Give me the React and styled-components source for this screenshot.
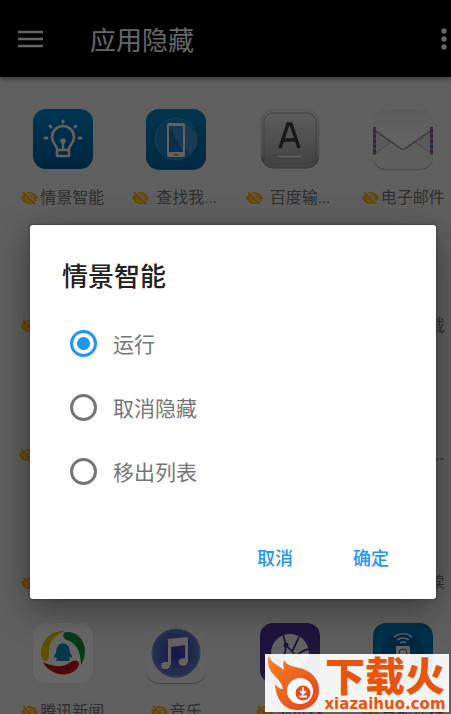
import React from 'react';
import styled, { createGlobalStyle } from 'styled-components';

const GlobalStyle = createGlobalStyle`
  * { box-sizing: border-box; }
  body {
    margin: 0;
    background: #ededed;
    font-family: Roboto, "Noto Sans CJK SC", sans-serif;
    overflow: hidden;
  }
  button { font-family: inherit; }
`;

const Page = styled.div`
  position: relative;
  height: 100vh;
  overflow: hidden;
`;

const Toolbar = styled.header`
  display: flex;
  align-items: center;
  height: 77px;
  padding-left: 16px;
  background: #000;
  color: #fff;
  box-shadow: 0 2px 5px rgba(0, 0, 0, 0.4);
`;

const Title = styled.h1`
  flex: 1;
  margin: 0 0 0 44px;
  padding-top: 4px;
  font-size: 26px;
  line-height: 36px;
  font-weight: 400;
`;

const IconButton = styled.button`
  display: flex;
  padding: 0;
  border: 0;
  background: none;
  color: inherit;
`;

const Grid = styled.main`
  display: grid;
  grid-template-columns: repeat(4, 1fr);
  grid-template-rows: repeat(2, 128px 129px);
  margin: 32px -9px 0 6px;
`;

const AppCell = styled.div`
  display: flex;
  flex-direction: column;
  align-items: center;
  gap: 17px;
`;

const AppIcon = styled.svg`
  display: block;
  width: 60px;
  height: 60px;
  overflow: visible;
`;

const Label = styled.div`
  display: flex;
  align-items: center;
  gap: ${(p) => (p.$cut ? 7 : 2)}px;
  font-size: 16px;
  line-height: 24px;
  color: #777;
  white-space: nowrap;
`;

const LabelText = styled.span`
  min-width: ${(p) => (p.$cut ? 64 : 0)}px;
`;

const Scrim = styled.div`
  position: absolute;
  inset: 0;
  display: flex;
  align-items: flex-start;
  padding: 225px 15px 0 30px;
  background: rgba(0, 0, 0, 0.6);
`;

const Dialog = styled.form`
  flex: 1;
  padding: 33px 32px 20px;
  border-radius: 3px;
  background: #fff;
  box-shadow: 0 10px 36px rgba(0, 0, 0, 0.4), 0 0 3px rgba(0, 0, 0, 0.4);
`;

const DialogTitle = styled.h2`
  margin: 0 0 15px;
  font-size: 26px;
  line-height: 38px;
  font-weight: 500;
  color: #212121;
`;

const Option = styled.label`
  display: flex;
  align-items: center;
  gap: 16px;
  height: 64px;
  padding-left: 8px;
  font-size: 21px;
  color: #757575;
`;

const Radio = styled.input`
  appearance: none;
  width: 27px;
  height: 27px;
  margin: 0;
  border: 3px solid #757575;
  border-radius: 50%;
  &:checked {
    border-color: #2196f3;
    background: radial-gradient(circle, #2196f3 6px, transparent 7px);
  }
`;

const Actions = styled.div`
  display: flex;
  justify-content: flex-end;
  gap: 36px;
  margin: 32px 3px 0 0;
`;

const TextButton = styled.button`
  width: 60px;
  height: 44px;
  padding: 0;
  border: 0;
  background: none;
  font-size: 18px;
  font-weight: 500;
  color: #2196f3;
`;

const Watermark = styled.aside`
  position: absolute;
  right: 2px;
  bottom: 2px;
  display: flex;
  width: 184px;
  height: 58px;
  background: rgba(255, 255, 255, 0.93);
  color: #e9540d;
`;

const Flame = styled.svg`
  flex: none;
  width: 56px;
  height: 58px;
`;

const Brand = styled.div`
  display: flex;
  flex-direction: column;
  align-items: center;
  flex: 1;
  padding-top: 4px;
`;

const BrandName = styled.div`
  font-size: 40px;
  line-height: 40px;
  font-weight: 900;
`;

const BrandUrl = styled.div`
  font-family: "DejaVu Sans", sans-serif;
  font-size: 15px;
  line-height: 12px;
  font-weight: 700;
`;

const EyeOff = () => (
  <svg width="17" height="14" viewBox="0 0 17 14" aria-hidden="true">
    <path d="M0 7C2 3 5 1 8.500 1S15 3 17 7c-2 4-5 6-8.500 6S2 11 0 7Z" fill="#ffb300" />
    <circle cx="8.500" cy="7" r="3.700" fill="none" stroke="#ededed" strokeWidth="1" />
    <path d="M3 0 15 12" stroke="#ededed" strokeWidth="1.100" />
    <path d="M2 1 14 13" stroke="#ffb300" strokeWidth="1.800" />
  </svg>
);

const Bulb = () => (
  <AppIcon viewBox="0 0 60 60">
    <defs>
      <linearGradient id="bulb" x1="0" y1="0" x2="0" y2="1">
        <stop offset="0" stopColor="#0087cf" /><stop offset="1" stopColor="#00599f" />
      </linearGradient>
    </defs>
    <rect width="60" height="60" rx="13" fill="url(#bulb)" />
    <g fill="none" stroke="#f2f2f2" strokeWidth="2.600" strokeLinecap="round" strokeLinejoin="round">
      <path d="M24 40c0-4-5-5-5-12a11 11 0 0 1 22 0c0 7-5 8-5 12v7H24zM24 41h12" />
      <path d="M30 33v6" />
      <path d="M30 12v1M17 17l1 1M43 17l-1 1M12 29h2M46 29h2" strokeWidth="3" />
    </g>
    <circle cx="30" cy="32" r="2.800" fill="#f2f2f2" />
  </AppIcon>
);

const Phone = () => (
  <AppIcon viewBox="0 0 60 60">
    <defs>
      <linearGradient id="phone" x1="0" y1="0" x2="0" y2="1">
        <stop offset="0" stopColor="#0086ba" /><stop offset="1" stopColor="#0064ae" />
      </linearGradient>
    </defs>
    <rect y="1" width="60" height="60" rx="13" fill="#4b6472" />
    <rect width="60" height="60" rx="13" fill="url(#phone)" />
    <circle cx="30" cy="30" r="21" fill="#2384c9" stroke="#5aa5d6" strokeWidth=".6" />
    <path d="M30 30 45 45A21 21 0 0 0 50 24L39 14Z" fill="#3f94d0" />
    <rect x="21" y="14" width="18" height="34" rx="2" fill="#f2f2f2" />
    <rect x="23" y="17" width="14" height="26" fill="#1678bd" />
    <path d="M23 17h14v26Z" fill="#3d90cc" />
    <path d="M28 45.500h4" stroke="#777" />
  </AppIcon>
);

const Keyboard = () => (
  <AppIcon viewBox="0 0 60 60">
    <defs>
      <linearGradient id="key" x1="0" y1="0" x2="0" y2="1">
        <stop offset="0" stopColor="#e6e6e6" /><stop offset="1" stopColor="#a8a8a8" />
      </linearGradient>
    </defs>
    <rect x="1" y="1" width="58" height="58" rx="12" fill="url(#key)" stroke="#c8c8c8" strokeWidth=".6" />
    <path d="M2 48a12 12 0 0 0 12 11h32a12 12 0 0 0 12-11" fill="none" stroke="#888" strokeWidth="1.200" />
    <rect x="4" y="4" width="52" height="51" rx="9" fill="url(#key)" stroke="#999" strokeWidth=".8" />
    <path d="M20 39 28 15h3l8 24M23 31h13" fill="none" stroke="#383d42" strokeWidth="3.400" />
    <path d="M18 47.500h24" stroke="#f8f8f8" />
  </AppIcon>
);

const Mail = () => (
  <AppIcon viewBox="0 0 60 60">
    <defs>
      <linearGradient id="mail" x1="0" y1="0" x2="0" y2="1">
        <stop offset="0" stopColor="#e4e4e4" /><stop offset="1" stopColor="#f8f8f8" />
      </linearGradient>
    </defs>
    <rect y="1" width="60" height="60" rx="13" fill="#b4b4b4" />
    <rect width="60" height="60" rx="13" fill="#ececec" />
    <path d="M0 20v26l20-13ZM60 20v26L40 33Z" fill="#dedede" />
    <path d="M0 46 20 32M60 46 40 32" stroke="#bbb" />
    <path d="M0 20 27 39q3 3 6 0L60 20" fill="none" stroke="#999" strokeWidth="1.600" />
    <path d="M0 19 27 37q3 3 6 0L60 19V13Q58 0 47 0H13Q2 0 0 13Z" fill="url(#mail)" />
    <path d="M1.500 18v28M58.500 18v28" stroke="#d45d68" strokeWidth="3" strokeDasharray="2.500 2.500" />
    <path d="M1.500 20.500v25M58.500 20.500v25" stroke="#2a79bd" strokeWidth="3" strokeDasharray="2.500 2.500" />
  </AppIcon>
);

const News = () => (
  <AppIcon viewBox="0 0 60 60">
    <rect width="60" height="60" rx="13" fill="#fff" />
    <path d="M32 8C18 7 8 17 8 31c0 9 8 9 8 2-1-12 4-21 16-25Z" fill="#e9c900" />
    <path d="M34 9c-5 0-5 7 0 8 10 3 14 13 14 25C57 27 50 9 34 9Z" fill="#15913d" />
    <path d="M10 39c8 16 31 16 36 3 1-4-4-6-8-3-8 6-18 5-28 0Z" fill="#c4131d" />
    <path d="M21 35c0-3 1-4 2-5 0-13 14-13 14 0 1 1 2 2 2 5l-2-1-1 2c2 1 1 2-1 2H25c-2 0-3-1-1-2l-1-2Z" fill="#1389bd" />
  </AppIcon>
);

const Music = () => (
  <AppIcon viewBox="0 0 60 60">
    <defs>
      <radialGradient id="music"><stop offset="0" stopColor="#3636ad" /><stop offset="1" stopColor="#627ccb" /></radialGradient>
    </defs>
    <rect y="1" width="60" height="60" rx="13" fill="#aaa" />
    <rect width="60" height="60" rx="13" fill="#f0f0f0" />
    <circle cx="30" cy="30" r="24" fill="url(#music)" stroke="#6fa0dc" />
    <path d="M8 40a24 24 0 0 0 34 11M38 7q14 5 16 19" fill="none" stroke="#b76bd2" />
    <g fill="#f4f4f4">
      <ellipse cx="19.500" cy="42.500" rx="4.500" ry="3.800" />
      <ellipse cx="37" cy="39" rx="4.500" ry="3.800" />
      <path d="M22 16 42 14v25h-3V22l-14 2v18h-3Z" />
    </g>
  </AppIcon>
);

const Browser = () => (
  <AppIcon viewBox="0 0 60 60">
    <rect width="60" height="60" rx="13" fill="#4b349b" />
    <circle cx="30" cy="30" r="19" fill="#f4f4f4" />
    <path d="M23 12q4 10 2 18L14 41M26 22l24 26M49 26q-14 3-20 20M39 14l-7 15" fill="none" stroke="#4b349b" strokeWidth="1.800" />
    <circle cx="26" cy="22" r="2.500" fill="#4b349b" />
  </AppIcon>
);

const Remote = () => (
  <AppIcon viewBox="0 0 60 60">
    <rect width="60" height="60" rx="13" fill="#0079b8" />
    <circle cx="30" cy="30" r="21" fill="#0065a4" />
    <path d="M21 14q9-7 18 0M24 17q6-4 12 0M27 20q3-2 6 0" fill="none" stroke="#f2f2f2" strokeWidth="1.600" />
    <rect x="23" y="23" width="14" height="30" rx="1" fill="#f2f2f2" />
    <circle cx="30" cy="30" r="4" fill="none" stroke="#555" />
  </AppIcon>
);

const apps = [
  { name: '情景智能', Icon: Bulb },
  { name: '查找我...', cut: true, Icon: Phone },
  { name: '百度输...', cut: true, Icon: Keyboard },
  { name: '电子邮件', Icon: Mail },
  { name: '应用市场' }, { name: '主题' }, { name: '天气' }, { name: '应用下载' },
  { name: '运动健...', cut: true }, { name: '视频' }, { name: '钱包' }, { name: '手机服...', cut: true },
  { name: '生活服务' }, { name: '备忘录' }, { name: '录音机' }, { name: '华为阅读' },
  { name: '腾讯新闻', Icon: News },
  { name: '音乐', Icon: Music },
  { name: '浏览器', Icon: Browser },
  { name: '智能遥控', Icon: Remote },
];

export default function App() {
  return (
    <>
      <GlobalStyle />
      <Page>
        <Toolbar>
          <IconButton aria-label="菜单">
            <svg width="30" height="20" viewBox="0 0 30 20">
              <path d="M2 3h25M2 10h25M2 17h25" stroke="currentColor" strokeWidth="2.500" />
            </svg>
          </IconButton>
          <Title>应用隐藏</Title>
          <IconButton aria-label="更多">
            <svg width="10" height="24" viewBox="0 0 10 24" fill="currentColor">
              <circle cx="3" cy="4" r="2.700" /><circle cx="3" cy="12" r="2.700" /><circle cx="3" cy="20" r="2.700" />
            </svg>
          </IconButton>
        </Toolbar>
        <Grid>
          {apps.map(({ name, cut, Icon = AppIcon }) => (
            <AppCell key={name}>
              <Icon />
              <Label $cut={cut}><EyeOff /><LabelText $cut={cut}>{name}</LabelText></Label>
            </AppCell>
          ))}
        </Grid>
        <Scrim>
          <Dialog role="dialog" aria-labelledby="dialog-title">
            <DialogTitle id="dialog-title">情景智能</DialogTitle>
            <Option><Radio type="radio" name="action" defaultChecked />运行</Option>
            <Option><Radio type="radio" name="action" />取消隐藏</Option>
            <Option><Radio type="radio" name="action" />移出列表</Option>
            <Actions>
              <TextButton type="button">取消</TextButton>
              <TextButton type="button">确定</TextButton>
            </Actions>
          </Dialog>
        </Scrim>
        <Watermark>
          <Flame viewBox="0 0 56 58">
            <defs>
              <linearGradient id="fire" x1="0" y1="0" x2="1" y2="1">
                <stop offset="0" stopColor="#f58220" /><stop offset="1" stopColor="#e2431e" />
              </linearGradient>
            </defs>
            <path d="M4 1c0 7 8 9 15 15-1-4-1-7 0-10 3 6 9 6 19 9 11 4 16 12 16 21 0 12-9 20-21 20-14 0-22-10-23-26 2 3 5 5 8 5C16 22-1 20 4 1Z" fill="url(#fire)" />
            <circle cx="35" cy="37" r="13" fill="#fff" />
            <circle cx="38" cy="39" r="7.500" fill="#e64a19" />
            <path d="M38 33v7m-3-3 3 3 3-3M34 42.500h8" fill="none" stroke="#fff" strokeWidth="1.800" />
          </Flame>
          <Brand>
            <BrandName>下载火</BrandName>
            <BrandUrl>xiazaihuo.com</BrandUrl>
          </Brand>
        </Watermark>
      </Page>
    </>
  );
}
